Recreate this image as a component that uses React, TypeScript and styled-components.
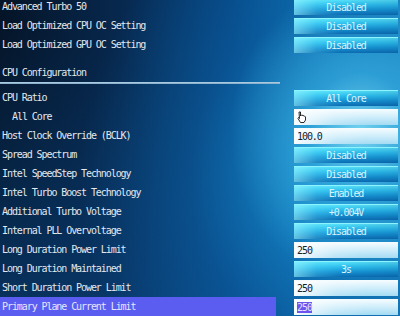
import React from "react";
import styled, { createGlobalStyle } from "styled-components";

const Global = createGlobalStyle`
  html, body { margin: 0; padding: 0; background: #061a33; }
  #root { width: 400px; height: 316px; }
`;

const Screen = styled.div`
  width: 400px;
  height: 316px;
  overflow: hidden;
  position: relative;
  font-family: "DejaVu Sans Mono", "Liberation Mono", monospace;
  font-size: 10px;
  letter-spacing: -1.08px;
  background:
    radial-gradient(ellipse 130px 150px at 90% 42%, rgba(140, 230, 250, 0.8) 0%, rgba(70, 190, 235, 0.5) 40%, rgba(30, 150, 215, 0) 100%),
    radial-gradient(ellipse 240px 280px at 80% 55%, rgba(25, 150, 215, 0.75) 0%, rgba(15, 110, 180, 0.35) 55%, rgba(10, 90, 160, 0) 100%),
    linear-gradient(200deg, rgba(0, 0, 0, 0) 35%, rgba(10, 75, 140, 0.55) 100%),
    linear-gradient(90deg, #051427 0%, #07284e 30%, #064582 58%, #0a68a8 78%, #1a88c4 100%);
`;

const List = styled.div`
  display: flex;
  flex-direction: column;
  margin-top: -3px;
`;

const Row = styled.div`
  display: grid;
  grid-template-columns: 276px 104px;
  column-gap: 18px;
  height: 19px;
  align-items: center;
`;

const Label = styled.div<{ $indent?: boolean; $selected?: boolean }>`
  height: ${(p) => (p.$selected ? "19px" : "auto")};
  display: flex;
  align-items: center;
  padding-left: ${(p) => (p.$indent ? "12px" : "2px")};
  color: ${(p) => (p.$selected ? "#e4e6ff" : "#e2e8ee")};
  background: ${(p) => (p.$selected ? "#5a5df0" : "transparent")};
  white-space: nowrap;
`;

const Button = styled.div`
  height: 16px;
  box-sizing: border-box;
  display: flex;
  align-items: center;
  justify-content: center;
  color: #d8f4ff;
  border-top: 1px solid #8cf4ff;
  background:
    linear-gradient(90deg, rgba(160, 248, 255, 0.6) 0%, rgba(120, 235, 255, 0.2) 22%, rgba(0, 0, 0, 0) 45%, rgba(0, 40, 100, 0.12) 100%),
    linear-gradient(180deg, #56e0f8 0%, #2ec0ee 30%, #1694d4 65%, #0c6cb2 100%);
  white-space: nowrap;
`;

const Input = styled.div`
  height: 16px;
  box-sizing: border-box;
  display: flex;
  align-items: center;
  padding-left: 3px;
  color: #14202c;
  border-top: 1px solid #f4fcff;
  background:
    linear-gradient(90deg, rgba(255, 255, 255, 0.9) 0%, rgba(255, 255, 255, 0.2) 40%, rgba(255, 255, 255, 0) 70%),
    linear-gradient(180deg, #f2fbff 0%, #d0eefb 45%, #a4dbf3 100%);
  white-space: nowrap;
`;

const Selection = styled.span`
  background: #6b55ee;
  color: #e6e2ff;
`;

const Header = styled.div`
  height: 16px;
  margin-top: 10px;
  display: flex;
  align-items: center;
  padding-left: 2px;
  color: #e2e8ee;
`;

const Separator = styled.div`
  width: 280px;
  height: 2px;
  margin-top: 2px;
  margin-bottom: 4px;
  background: linear-gradient(180deg, #b8d4e6 0%, #7fa8c8 100%);
`;

type Item = {
  label: string;
  value: string;
  kind: "button" | "input";
  indent?: boolean;
  selected?: boolean;
  cursor?: boolean;
};

const top: Item[] = [
  { label: "Advanced Turbo 50", value: "Disabled", kind: "button" },
  { label: "Load Optimized CPU OC Setting", value: "Disabled", kind: "button" },
  { label: "Load Optimized GPU OC Setting", value: "Disabled", kind: "button" },
];

const cpu: Item[] = [
  { label: "CPU Ratio", value: "All Core", kind: "button" },
  { label: "All Core", value: "", kind: "input", indent: true, cursor: true },
  { label: "Host Clock Override (BCLK)", value: "100.0", kind: "input" },
  { label: "Spread Spectrum", value: "Disabled", kind: "button" },
  { label: "Intel SpeedStep Technology", value: "Disabled", kind: "button" },
  { label: "Intel Turbo Boost Technology", value: "Enabled", kind: "button" },
  { label: "Additional Turbo Voltage", value: "+0.004V", kind: "button" },
  { label: "Internal PLL Overvoltage", value: "Disabled", kind: "button" },
  { label: "Long Duration Power Limit", value: "250", kind: "input" },
  { label: "Long Duration Maintained", value: "3s", kind: "button" },
  { label: "Short Duration Power Limit", value: "250", kind: "input" },
  { label: "Primary Plane Current Limit", value: "250", kind: "input", selected: true },
];

const Cursor = () => (
  <svg width="10" height="13" viewBox="0 0 10 13">
    <path
      d="M2 1 L3.5 1 L3.5 5 L4.5 4 L6 4.5 L7.5 5 L8.5 6 L8.5 9 L7 11.5 L3.5 11.5 L1 7.5 L1.5 6.5 L2.5 7.5 Z"
      fill="#ffffff"
      stroke="#111"
      strokeWidth="0.9"
      strokeLinejoin="round"
    />
  </svg>
);

const Entry = ({ item }: { item: Item }) => (
  <Row>
    <Label $indent={item.indent} $selected={item.selected}>
      {item.label}
    </Label>
    {item.kind === "button" ? (
      <Button>{item.value}</Button>
    ) : (
      <Input>
        {item.cursor ? <Cursor /> : item.selected ? <Selection>{item.value}</Selection> : item.value}
      </Input>
    )}
  </Row>
);

export default function App() {
  return (
    <Screen>
      <Global />
      <List>
        {top.map((it) => (
          <Entry key={it.label} item={it} />
        ))}
        <Header>CPU Configuration</Header>
        <Separator />
        {cpu.map((it) => (
          <Entry key={it.label + it.value} item={it} />
        ))}
      </List>
    </Screen>
  );
}
